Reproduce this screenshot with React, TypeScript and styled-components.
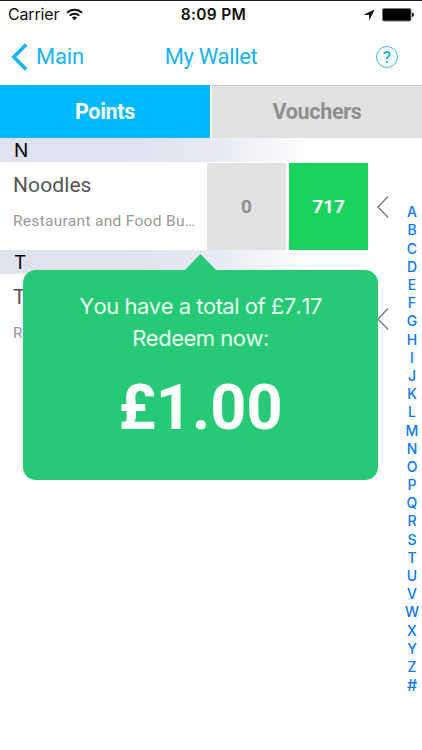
import React from "react";
import styled, { createGlobalStyle } from "styled-components";

const GlobalStyle = createGlobalStyle`
  * { box-sizing: border-box; }
  body { margin: 0; background: #fff; overflow: hidden; }
`;

const Screen = styled.div`
  position: relative;
  width: 422px;
  height: 750px;
  background: #fff;
  border-top: 1px solid #1c1a1e;
  font-family: Roboto, sans-serif;
  overflow: hidden;
`;

const StatusBar = styled.div`
  display: grid;
  grid-template-columns: 1fr auto 1fr;
  align-items: center;
  height: 27px;
  padding: 0 8px 0 8px;
  font: 400 16px/27px Inter, sans-serif;
  color: #111;
`;

const StatusGroup = styled.div<{ $end?: boolean }>`
  display: flex;
  align-items: center;
  justify-content: ${(p) => (p.$end ? "flex-end" : "flex-start")};
  gap: 7px;
`;

const Carrier = styled.span`
  letter-spacing: -0.15px;
`;

const Clock = styled.span`
  margin-left: 5px;
  font-weight: 600;
  font-size: 15.5px;
  letter-spacing: 0.3px;
`;

const NavBar = styled.div`
  display: grid;
  grid-template-columns: 1fr auto 1fr;
  align-items: center;
  height: 57px;
  padding: 0 24px 0 11px;
  color: #18b2f6;
`;

const BackButton = styled.div`
  display: flex;
  align-items: center;
  gap: 8px;
  font-size: 22px;
  line-height: 28px;
  letter-spacing: -0.2px;
`;

const NavTitle = styled.div`
  font-size: 22px;
  line-height: 28px;
  letter-spacing: -0.35px;
  margin-left: 13px;
`;

const HelpButton = styled.div`
  justify-self: end;
  display: flex;
  align-items: center;
  justify-content: center;
  width: 22px;
  height: 22px;
  border: 1px solid #3db7ee;
  border-radius: 50%;
  font-size: 17px;
  font-weight: 500;
  line-height: 20px;
`;

const Tabs = styled.div`
  display: grid;
  grid-template-columns: 210px 210px;
  gap: 2px;
  height: 53px;
`;

const Tab = styled.div<{ $active?: boolean }>`
  display: flex;
  align-items: center;
  justify-content: center;
  font-size: 21.5px;
  font-weight: 700;
  letter-spacing: -0.3px;
  padding-bottom: 1px;
  border-top: 1px solid ${(p) => (p.$active ? "#12b0f2" : "#cfcfcf")};
  background: ${(p) => (p.$active ? "#00b8ff" : "#e2e2e2")};
  color: ${(p) => (p.$active ? "#fff" : "#8e8e8e")};
`;

const SectionHeader = styled.div`
  height: 24px;
  padding-left: 14px;
  font: 400 19px/25px Inter, sans-serif;
  color: #050505;
  background: linear-gradient(90deg, #dfe3ed 0, #dfe3ed 125px, #e6e9f2 210px, #fff 310px);
`;

const Row = styled.div`
  display: grid;
  grid-template-columns: 207px 79px 79px auto;
  height: 88px;
  padding-top: 1px;
`;

const Shop = styled.div`
  padding: 9px 0 0 13px;
`;

const ShopName = styled.div`
  font-size: 21px;
  line-height: 26px;
  letter-spacing: 0.1px;
  color: #555;
`;

const ShopType = styled.div`
  margin-top: 13px;
  font-size: 15.5px;
  line-height: 20px;
  letter-spacing: 0.3px;
  color: #999;
  white-space: nowrap;
`;

const Score = styled.div<{ $earned?: boolean }>`
  display: flex;
  align-items: center;
  justify-content: center;
  height: 87px;
  margin-left: ${(p) => (p.$earned ? "3px" : "0")};
  margin-right: ${(p) => (p.$earned ? "-3px" : "0")};
  font-size: 19px;
  font-weight: 700;
  background: ${(p) => (p.$earned ? "#18d45f" : "#e2e2e2")};
  color: ${(p) => (p.$earned ? "#fff" : "#8e8e8e")};
`;

const RowArrow = styled.svg`
  align-self: center;
  margin-left: 12px;
`;

const IndexBar = styled.div`
  position: absolute;
  right: 1px;
  top: 202.3px;
  width: 18px;
  font: 500 14px/18.19px Inter, sans-serif;
  color: #0b78f8;
`;

const IndexLetter = styled.div<{ $large?: boolean }>`
  height: 18.19px;
  display: flex;
  justify-content: center;
  font-size: ${(p) => (p.$large ? "16px" : "14px")};
`;

const Popover = styled.div`
  position: absolute;
  left: 23px;
  top: 269px;
  width: 355px;
  height: 210px;
  padding-top: 21px;
  border-radius: 13px;
  background: #26ca76;
  color: #fff;
  text-align: center;
`;

const PopoverTip = styled.svg`
  position: absolute;
  left: 161px;
  top: -16px;
`;

const Message = styled.div`
  font: 400 22px/31.5px Inter, sans-serif;
  font-kerning: none;
  letter-spacing: -0.5px;
  color: #ebfaf2;
`;

const Amount = styled.div`
  margin-top: 17px;
  font-size: 63px;
  line-height: 74px;
  font-weight: 700;
`;

const letters = [..."ABCDEFGHIJKLMNOPQRSTUVWXYZ#"];

const shops = [
  { letter: "N", name: "Noodles", type: "Restaurant and Food Bu…", vouchers: "0", points: "717" },
  { letter: "T", name: "T", type: "R", vouchers: "", points: "" },
];

export default function App() {
  return (
    <Screen>
      <GlobalStyle />
      <StatusBar>
        <StatusGroup>
          <Carrier>Carrier</Carrier>
          <svg width="17" height="13" viewBox="0 0 17 13" fill="none" stroke="#111" strokeWidth="2">
            <path d="M1 4.8C5.2.6 11.8.6 16 4.8M3.7 7.6c2.7-2.6 6.9-2.6 9.6 0" />
            <path d="M8.5 12.3 5.8 9.6c1.5-1.4 3.9-1.4 5.4 0z" fill="#111" stroke="none" />
          </svg>
        </StatusGroup>
        <Clock>8:09 PM</Clock>
        <StatusGroup $end>
          <svg width="12" height="12" viewBox="0 0 12 12">
            <path d="M11.6.4 6.3 11.5 6 6 .5 5.8z" fill="#111" />
          </svg>
          <svg width="32" height="14" viewBox="0 0 32 14">
            <rect x=".5" y=".5" width="28.5" height="12.5" rx="1.5" fill="#000" stroke="#777" />
            <path d="M30 4.5q2 .4 2 2.3t-2 2.3z" fill="#111" />
          </svg>
        </StatusGroup>
      </StatusBar>
      <NavBar>
        <BackButton>
          <svg width="17" height="28" viewBox="0 0 17 28">
            <path d="M15.2 1.5 2.8 14l12.4 12.5" fill="none" stroke="#18b2f6" strokeWidth="3.6" />
          </svg>
          Main
        </BackButton>
        <NavTitle>My Wallet</NavTitle>
        <HelpButton>?</HelpButton>
      </NavBar>
      <Tabs>
        <Tab $active>Points</Tab>
        <Tab>Vouchers</Tab>
      </Tabs>
      {shops.map((s) => (
        <React.Fragment key={s.letter}>
          <SectionHeader>{s.letter}</SectionHeader>
          <Row>
            <Shop>
              <ShopName>{s.name}</ShopName>
              <ShopType>{s.type}</ShopType>
            </Shop>
            <Score>{s.vouchers}</Score>
            <Score $earned>{s.points}</Score>
            <RowArrow width="12" height="24" viewBox="0 0 12 24">
              <path d="M11 1.5.9 12 11 22.5" fill="none" stroke="#777" strokeWidth="1.3" />
            </RowArrow>
          </Row>
        </React.Fragment>
      ))}
      <IndexBar>
        {letters.map((l) => (
          <IndexLetter key={l} $large={l === "#"}>
            {l}
          </IndexLetter>
        ))}
      </IndexBar>
      <Popover>
        <PopoverTip width="34" height="17" viewBox="0 0 34 17">
          <path d="M0 17 16.5 0 33 17z" fill="#26ca76" />
        </PopoverTip>
        <Message>
          You have a total of £7.17
          <br />
          Redeem now:
        </Message>
        <Amount>£1.00</Amount>
      </Popover>
    </Screen>
  );
}
